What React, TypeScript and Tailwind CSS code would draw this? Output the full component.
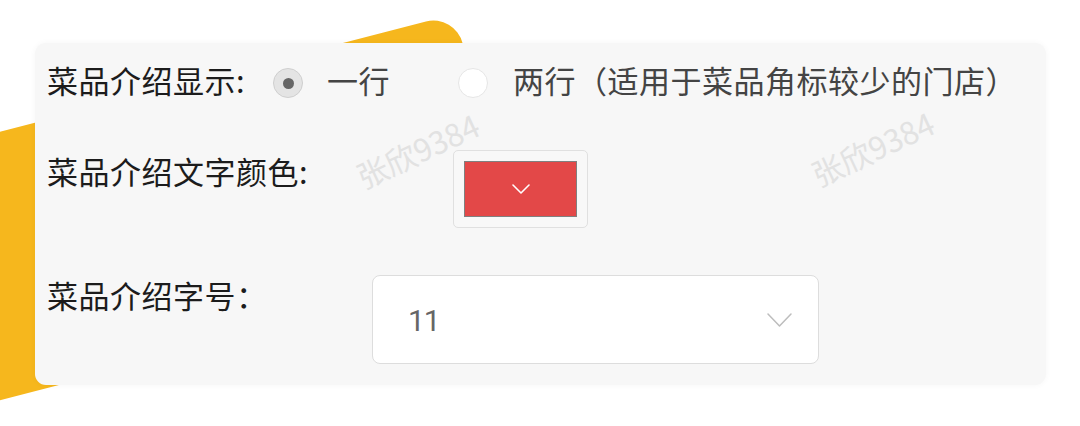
import React from "react";

const font = { fontFamily: '"Noto Sans CJK SC", "Noto Sans", sans-serif' };

function Chevron({ className, color, w, h, sw }: { className?: string; color: string; w: number; h: number; sw: number }) {
  return (
    <svg className={className} width={w} height={h} viewBox={`0 0 ${w} ${h}`} fill="none">
      <path d={`M1 1 L${w / 2} ${h - 1} L${w - 1} 1`} stroke={color} strokeWidth={sw} strokeLinecap="round" strokeLinejoin="round" />
    </svg>
  );
}

export default function App() {
  return (
    <div className="relative w-[1080px] h-[426px] overflow-hidden bg-white" style={font}>
      <svg className="absolute left-0 top-0" width="1080" height="426">
        <g transform="translate(455,14) rotate(-14.5)">
          <rect x={-700} y={0} width={700} height={260} rx={30} fill="#f6b71d" />
        </g>
      </svg>

      <div className="relative ml-[35px] mt-[43px] w-[1011px] h-[342px] rounded-[11px] bg-[#f7f7f7] shadow-[0_0_6px_rgba(0,0,0,0.04)] pl-[12px] flex flex-col">
        <div className="mt-[17px] h-[40px] flex items-center">
          <div className="w-[226px] text-[31px] tracking-[0.5px] leading-[40px] text-[#1c1c1c] whitespace-nowrap">菜品介绍显示:</div>
          <div className="mt-[6px] w-[30px] h-[30px] rounded-full bg-[#e4e4e4] border-[1.5px] border-[#cfcfcf] flex items-center justify-center">
            <div className="w-[11px] h-[11px] rounded-full bg-[#666666]" />
          </div>
          <div className="ml-[24px] text-[31px] tracking-[0.5px] leading-[40px] text-[#444444]">一行</div>
          <div className="mt-[6px] ml-[68px] w-[30px] h-[30px] rounded-full bg-white border-[1.5px] border-[#e6e6e6]" />
          <div className="ml-[25px] text-[31px] tracking-[0.5px] leading-[40px] text-[#444444] whitespace-nowrap">两行（适用于菜品角标较少的门店）</div>
        </div>

        <div className="mt-[50px] flex items-start">
          <div className="w-[406px] mt-[1px] text-[31px] tracking-[0.5px] leading-[40px] text-[#1c1c1c] whitespace-nowrap">菜品介绍文字颜色:</div>
          <div className="w-[135px] h-[78px] rounded-[5px] border border-[#e0e0e0] bg-[#f8f8f8] flex items-center justify-center">
            <div className="w-[113px] h-[56px] bg-[#e34848] border-[1.5px] border-[#808080] flex items-center justify-center">
              <Chevron color="#ffffff" w={18} h={10} sw={1.6} />
            </div>
          </div>
        </div>

        <div className="mt-[47px] flex items-start">
          <div className="w-[325px] text-[31px] tracking-[0.5px] leading-[40px] text-[#1c1c1c] whitespace-nowrap">菜品介绍字号：</div>
          <div className="w-[447px] h-[89px] rounded-[8px] border-[1.5px] border-[#dddddd] bg-white flex items-center justify-between pl-[35px] pr-[26px]">
            <span className="text-[30px] leading-[40px] text-[#666666] mt-[2px] tracking-[-1px]" style={{ fontFamily: "Roboto, sans-serif" }}>11</span>
            <Chevron color="#bdbdbd" w={25} h={14} sw={1.5} />
          </div>
        </div>
      </div>

      <div className="absolute left-[358px] top-[162px] -rotate-[25deg] text-[31px] leading-[31px] text-[#e2e2e2] whitespace-nowrap origin-left">张欣9384</div>
      <div className="absolute left-[813px] top-[160px] -rotate-[25deg] text-[31px] leading-[31px] text-[#e2e2e2] whitespace-nowrap origin-left">张欣9384</div>
    </div>
  );
}
